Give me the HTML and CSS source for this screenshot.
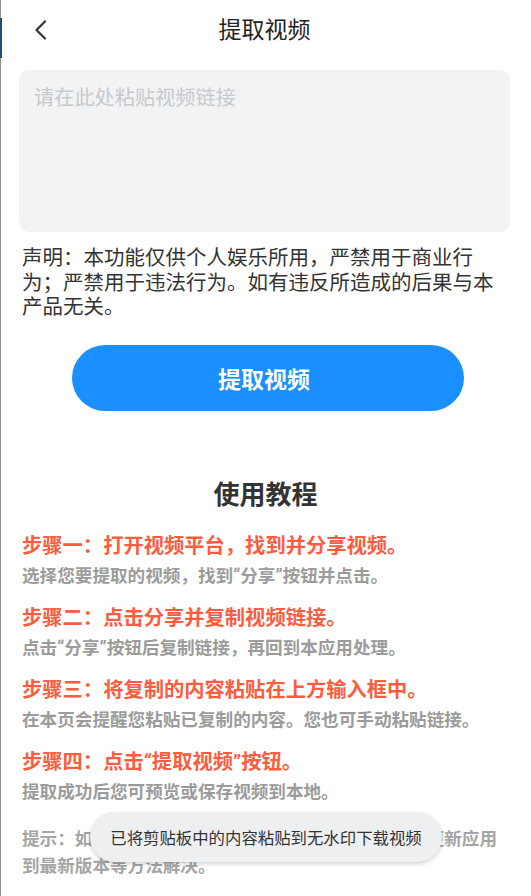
FILE: index.html
```html
<!DOCTYPE html>
<html lang="zh-CN">
<head>
<meta charset="utf-8">
<title>提取视频</title>
<link rel="stylesheet" href="styles.css">
</head>
<body>
<div class="page">
  <div class="edge"><div class="edge-mark"></div></div>
  <header class="header">
    <span class="back">
      <svg width="14" height="20" viewBox="0 0 14 20"><path d="M11 1.5 L2.5 10 L11 18.5" fill="none" stroke="#333" stroke-width="2.2" stroke-linecap="round" stroke-linejoin="round"/></svg>
    </span>
    <h1 class="title">提取视频</h1>
  </header>
  <div class="input-box"><span class="placeholder">请在此处粘贴视频链接</span></div>
  <p class="notice">声明：本功能仅供个人娱乐所用，严禁用于商业行<br>为；严禁用于违法行为。如有违反所造成的后果与本产品无关。</p>
  <div class="btn-row"><button class="btn">提取视频</button></div>
  <h2 class="section-title">使用教程</h2>
  <div class="steps">
    <p class="step">步骤一：打开视频平台，找到并分享视频。</p>
    <p class="desc">选择您要提取的视频，找到“分享”按钮并点击。</p>
    <p class="step">步骤二：点击分享并复制视频链接。</p>
    <p class="desc">点击“分享”按钮后复制链接，再回到本应用处理。</p>
    <p class="step">步骤三：将复制的内容粘贴在上方输入框中。</p>
    <p class="desc">在本页会提醒您粘贴已复制的内容。您也可手动粘贴链接。</p>
    <p class="step">步骤四：点击“提取视频”按钮。</p>
    <p class="desc">提取成功后您可预览或保存视频到本地。</p>
    <p class="tip">提示：如遇到视频无法解析或提取失败情况，可通过更新应用到最新版本等方法解决。</p>
  </div>
  <div class="toast">已将剪贴板中的内容粘贴到无水印下载视频</div>
</div>
</body>
</html>
```
FILE: styles.css
```css
html, body {
  margin: 0;
  padding: 0;
  background: #fff;
}
body {
  font-family: "Roboto", "Noto Sans CJK SC", sans-serif;
  color: #333;
}
.page {
  position: relative;
  width: 531px;
  height: 896px;
  overflow: hidden;
}
.edge {
  position: absolute;
  left: 0;
  top: 0;
  width: 1px;
  height: 896px;
  background: #8e8e8e;
}
.edge-mark {
  margin-top: 18px;
  height: 40px;
  width: 2px;
  background: #1f4e78;
}
.header {
  height: 62px;
  display: flex;
  align-items: center;
  justify-content: center;
  position: relative;
}
.back {
  position: absolute;
  left: 34px;
  top: 20px;
  width: 14px;
  height: 20px;
  display: flex;
}
.title {
  margin: 0;
  font-size: 23px;
  font-weight: 400;
  color: #222;
  line-height: 30px;
  padding-right: 2px;
}
.input-box {
  margin: 8px 21px 0 19px;
  height: 162px;
  background: #f2f3f5;
  border-radius: 10px;
  padding: 15px 15px;
  box-sizing: border-box;
}
.placeholder {
  display: block;
  font-size: 20.2px;
  line-height: 26px;
  color: #c8c9cc;
}
.notice {
  margin: 14px 22px 0 22px;
  font-size: 20.5px;
  line-height: 24.5px;
  color: #333;
}
.btn-row {
  margin-top: 25px;
  padding-left: 72px;
  display: flex;
}
.btn {
  width: 392px;
  height: 66px;
  border: none;
  border-radius: 33px;
  background: #1a8fff;
  color: #fff;
  font-family: "Noto Sans CJK SC", sans-serif;
  font-size: 23px;
  font-weight: 700;
  padding: 0;
  padding-right: 8px;
}
.section-title {
  margin: 66px 0 0 0;
  text-align: center;
  font-size: 26px;
  line-height: 36px;
  font-weight: 700;
  color: #333;
}
.steps {
  margin: 19px 22px 0 22px;
}
.steps p {
  margin: 0;
}
.step {
  font-size: 20.3px;
  line-height: 28px;
  font-weight: 700;
  color: #fa5d3f;
  margin-top: 14.5px !important;
}
.step:first-child {
  margin-top: 0 !important;
}
.desc {
  font-size: 17.6px;
  line-height: 26px;
  font-weight: 700;
  color: #9b9b9b;
  margin-top: 3.5px !important;
}
.tip {
  font-size: 17.6px;
  line-height: 27px;
  font-weight: 700;
  color: #a5a5a5;
  margin-top: 21px !important;
}
.toast {
  position: absolute;
  left: 90px;
  top: 812px;
  width: 352px;
  height: 50px;
  border-radius: 25px;
  background: #eeeff1;
  box-shadow: 0 2px 4px rgba(0,0,0,0.18);
  display: flex;
  align-items: center;
  justify-content: center;
  font-size: 16.4px;
  color: #333;
}
```
